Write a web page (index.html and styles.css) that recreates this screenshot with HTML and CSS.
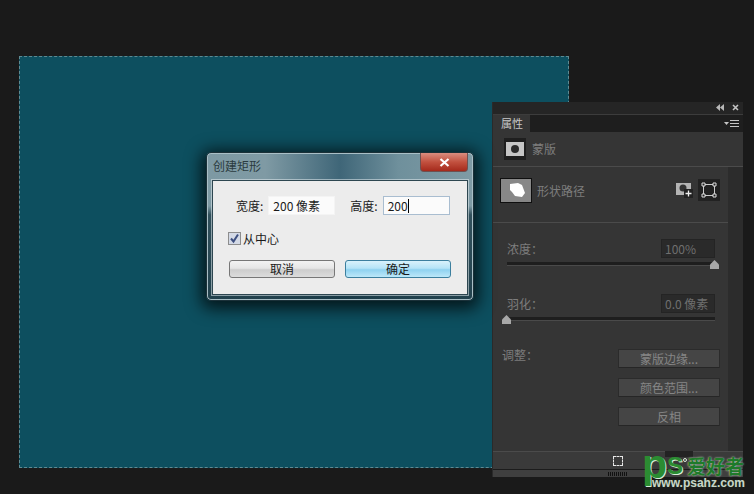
FILE: index.html
```html
<!DOCTYPE html>
<html lang="zh-CN">
<head>
    <meta charset="UTF-8">
    <title>创建矩形</title>
    <link rel="stylesheet" href="styles.css">
</head>
<body>

    <!-- Document canvas -->
    <div class="canvas"></div>

    <!-- Properties panel -->
    <div class="panel">
        <div class="panel-top">
            <svg class="top-icon" width="24" height="8" viewBox="0 0 24 8">
                <path d="M4 0v7L0 3.500zM8 0v7L4 3.500z" fill="#b8b8b8"/>
                <path d="M17 1l5 5M22 1l-5 5" stroke="#c4c4c4" stroke-width="1.600"/>
            </svg>
        </div>
        <div class="panel-tabs">
            <div class="tab">属性</div>
            <svg class="menu-icon" width="16" height="8" viewBox="0 0 16 8">
                <path d="M0 2h5L2.500 5z" fill="#c4c4c4"/>
                <path d="M6 .5h9M6 3.500h9M6 6.500h9" stroke="#c4c4c4"/>
            </svg>
        </div>
        <div class="panel-head">
            <div class="mask-thumb"><span class="mask-dot"></span></div>
            <span class="head-label">蒙版</span>
        </div>
        <div class="panel-main">
            <div class="panel-body">
                <div class="path-row">
                    <div class="path-thumb">
                        <svg width="30" height="23" viewBox="0 0 30 23">
                            <path d="M9 5l8-1 4 2 3 8-3 4-7-1-3-4-2-2z" fill="#fff"/>
                        </svg>
                    </div>
                    <span class="path-label">形状路径</span>
                    <svg class="add-mask" width="17" height="15" viewBox="0 0 17 15">
                        <rect x="0" y="0" width="15" height="12" fill="#b4b4b4"/>
                        <circle cx="7" cy="5" r="3.500" fill="#333"/>
                        <rect x="8" y="6" width="9" height="9" fill="#222"/>
                        <path d="M12.500 7.500v6M9.500 10.500h6" stroke="#eee" stroke-width="1.300"/>
                    </svg>
                    <div class="edit-box">
                        <svg width="16" height="16" viewBox="0 0 16 16">
                            <rect x="2.500" y="2.500" width="11" height="11" fill="none" stroke="#ccc"/>
                            <path d="M1 1h3v3H1zM12 1h3v3h-3zM1 12h3v3H1zM12 12h3v3h-3z" fill="#222" stroke="#ddd"/>
                        </svg>
                    </div>
                </div>
                <div class="sliders">
                    <div class="slider-group">
                        <div class="slider-top">
                            <span>浓度：</span>
                            <span class="value-box">100%</span>
                        </div>
                        <div class="track"><span class="knob knob-end"></span></div>
                    </div>
                    <div class="slider-group">
                        <div class="slider-top">
                            <span>羽化：</span>
                            <span class="value-box">0.0 像素</span>
                        </div>
                        <div class="track"><span class="knob knob-start"></span></div>
                    </div>
                </div>
                <div class="adjust">
                    <span class="adjust-label">调整：</span>
                    <div class="adjust-btns">
                        <div class="dark-btn">蒙版边缘...</div>
                        <div class="dark-btn">颜色范围...</div>
                        <div class="dark-btn">反相</div>
                    </div>
                </div>
            </div>
            <div class="scroll"></div>
        </div>
        <div class="panel-foot">
            <span class="select-icon"></span>
            <span class="foot-tab"></span>
        </div>
        <div class="panel-grip"><span class="grip"></span></div>
    </div>

    <!-- Dialog -->
    <div class="dialog">
        <div class="title-bar">
            <span class="title">创建矩形</span>
            <div class="close-btn">
                <svg width="11" height="9" viewBox="0 0 11 9">
                    <path d="M1.500 1l8 7M9.500 1l-8 7" stroke="#fff" stroke-width="2.200"/>
                </svg>
            </div>
        </div>
        <div class="client">
            <div class="field-row">
                <label class="field">宽度:<span class="input">200 像素</span></label>
                <label class="field">高度:<span class="input input-active">200<i class="caret"></i></span></label>
            </div>
            <div class="check-row">
                <span class="check">
                    <svg width="11" height="11" viewBox="0 0 11 11">
                        <path d="M2 5.500l2.500 3L9 1.500" fill="none" stroke="#3d4f80" stroke-width="2"/>
                    </svg>
                </span>
                <span>从中心</span>
            </div>
            <div class="btn-row">
                <div class="btn">取消</div>
                <div class="btn btn-default">确定</div>
            </div>
        </div>
    </div>

    <!-- Watermark -->
    <div class="watermark">
        <span class="wm-p">p</span><span class="wm-s">S</span><span class="wm-dot"></span><span class="wm-cn">爱好者</span>
        <div class="wm-url">www.psahz.com</div>
    </div>

</body>
</html>
```

FILE: styles.css
```css
* {
    margin: 0;
    padding: 0;
    box-sizing: border-box;
}
body {
    position: relative;
    width: 754px;
    height: 494px;
    overflow: hidden;
    background: #1a1a1a;
    font-family: "Noto Sans CJK SC", "Liberation Sans", sans-serif;
    font-size: 12px;
}
.canvas {
    position: absolute;
    left: 19px;
    top: 56px;
    width: 550px;
    height: 412px;
    background: #0d4f5f;
    border: 1px dashed #5f8a92;
}

/* Properties panel */
.panel {
    position: absolute;
    left: 492px;
    top: 102px;
    width: 251px;
    height: 375px;
    display: flex;
    flex-direction: column;
    background: #353535;
    color: #7d7d7d;
    border-left: 1px solid #2a2a2a;
}
.panel-top {
    height: 13px;
    flex-shrink: 0;
    display: flex;
    justify-content: flex-end;
    align-items: center;
    padding-right: 3px;
    background: #252525;
    border-bottom: 1px solid #3c3c3c;
}
.panel-tabs {
    height: 17px;
    flex-shrink: 0;
    display: flex;
    justify-content: space-between;
    align-items: center;
    padding-right: 3px;
    background: #1e1e1e;
}
.tab {
    width: 37px;
    height: 17px;
    background: #353535;
    color: #c8c8c8;
    font-size: 11px;
    line-height: 17px;
    padding-left: 8px;
}
.panel-head {
    height: 35px;
    flex-shrink: 0;
    display: flex;
    align-items: center;
    padding: 0 0 1px 11px;
    gap: 6px;
    border-bottom: 1px solid #4b4b4b;
}
.mask-thumb {
    width: 22px;
    height: 22px;
    display: flex;
    align-items: center;
    justify-content: center;
    background: #c6c6c6;
    border: 3px solid #1f1f1f;
    border-width: 4px 2px;
}
.mask-dot {
    width: 8px;
    height: 8px;
    border-radius: 50%;
    background: #2b2b2b;
}
.panel-main {
    flex: 1;
    display: flex;
    min-height: 0;
}
.panel-body {
    flex: 1;
    display: flex;
    flex-direction: column;
}
.scroll {
    width: 15px;
    background: #2c2c2c;
}
.path-row {
    height: 56px;
    flex-shrink: 0;
    display: flex;
    align-items: center;
    padding: 0 8px 9px 7px;
    border-bottom: 1px solid #4b4b4b;
}
.path-thumb {
    width: 32px;
    height: 25px;
    background: #878787;
    border: 1px solid #0f0f0f;
    overflow: hidden;
}
.path-thumb svg {
    display: block;
}
.path-label {
    margin-left: 5px;
    flex: 1;
}
.add-mask {
    margin-right: 5px;
}
.edit-box {
    width: 22px;
    height: 22px;
    display: flex;
    align-items: center;
    justify-content: center;
    background: #222;
}
.sliders {
    padding: 16px 13px 0 14px;
    display: flex;
    flex-direction: column;
    gap: 28px;
}
.slider-group {
    display: flex;
    flex-direction: column;
}
.slider-top {
    display: flex;
    justify-content: space-between;
    align-items: center;
    height: 19px;
}
.value-box {
    width: 54px;
    height: 19px;
    background: #2a2a2a;
    border: 1px solid #242424;
    line-height: 17px;
    padding-left: 3px;
    white-space: nowrap;
    color: #6f6f6f;
}
.track {
    position: relative;
    height: 4px;
    margin-top: 4px;
    background: #1e1e1e;
    border-bottom: 1px solid #4a4a4a;
}
.knob {
    position: absolute;
    top: -2px;
    width: 9px;
    height: 9px;
    background: #a8a8a8;
    clip-path: polygon(50% 0, 100% 50%, 100% 100%, 0 100%, 0 50%);
}
.knob-end {
    right: -4px;
}
.knob-start {
    left: -5px;
}
.adjust {
    display: flex;
    justify-content: space-between;
    padding: 28px 8px 0 9px;
}
.adjust-label {
    line-height: 12px;
}
.adjust-btns {
    display: flex;
    flex-direction: column;
    gap: 10px;
}
.dark-btn {
    width: 102px;
    height: 19px;
    background: #454545;
    border: 1px solid #2b2b2b;
    border-bottom-color: #262626;
    border-radius: 1px;
    text-align: center;
    line-height: 17px;
    color: #868686;
}
.panel-foot {
    position: relative;
    height: 19px;
    flex-shrink: 0;
    background: #3a3a3a;
    border-top: 1px solid #4b4b4b;
    border-bottom: 1px solid #1c1c1c;
}
.select-icon {
    position: absolute;
    left: 120px;
    top: 4px;
    width: 10px;
    height: 10px;
    border: 1px dashed #e8e8e8;
}
.foot-tab {
    position: absolute;
    left: 172px;
    top: -1px;
    width: 28px;
    height: 6px;
    background: #232323;
}
.panel-grip {
    height: 7px;
    flex-shrink: 0;
    display: flex;
    justify-content: center;
    background: #3f3f3f;
}
.grip {
    width: 20px;
    height: 4px;
    margin-top: 2px;
    background: repeating-linear-gradient(90deg, #111 0 1px, transparent 1px 2px);
}

/* Dialog */
.dialog {
    position: absolute;
    left: 206px;
    top: 152px;
    width: 268px;
    height: 149px;
    padding: 0 5px 5px;
    display: flex;
    flex-direction: column;
    border: 1px solid #1a3038;
    border-radius: 5px;
    background:
        linear-gradient(180deg, transparent 36%, rgba(18, 50, 62, 0.7) 42%, rgba(18, 50, 62, 0.85) 100%),
        linear-gradient(90deg, #7d99a3 0%, #7f9aa4 22%, #3f6678 50%, #6f909c 72%, #7f9ba5 100%);
    box-shadow: 0 0 0 1px #a9bfc6 inset, 0 3px 16px 5px rgba(0, 0, 0, 0.7);
}
.title-bar {
    position: relative;
    height: 27px;
    flex-shrink: 0;
}
.title {
    line-height: 25px;
    color: #2b3b40;
    padding-left: 1px;
}
.close-btn {
    position: absolute;
    right: 0;
    top: 0;
    width: 48px;
    height: 19px;
    display: flex;
    align-items: center;
    justify-content: center;
    background: linear-gradient(#d98d7f, #c2513f 50%, #a52a1c);
    border: 1px solid #6f5050;
    border-top: none;
    border-radius: 0 0 4px 4px;
}
.client {
    flex: 1;
    display: flex;
    flex-direction: column;
    background: #ececec;
    border: 1px solid #2d4650;
    box-shadow: 0 0 0 1px rgba(225, 235, 238, 0.55);
    color: #1a1a1a;
}
.field-row {
    display: flex;
    padding: 15px 0 0 23px;
    gap: 15px;
}
.field {
    display: flex;
    align-items: center;
    gap: 5px;
    white-space: nowrap;
}
.input {
    width: 67px;
    height: 19px;
    padding-left: 4px;
    background: #fbfbfb;
    line-height: 18px;
    border: 1px solid #f4f4f4;
}
.input-active {
    border-color: #a9bdd0;
}
.caret {
    display: inline-block;
    width: 1px;
    height: 14px;
    background: #000;
    vertical-align: -2px;
}
.check-row {
    display: flex;
    align-items: center;
    gap: 2px;
    padding: 15px 0 0 15px;
}
.check {
    width: 13px;
    height: 13px;
    display: flex;
    align-items: center;
    justify-content: center;
    background: #d4dae6;
    border: 1px solid #8d8d8d;
}
.btn-row {
    display: flex;
    gap: 10px;
    padding: 13px 0 0 16px;
}
.btn {
    width: 106px;
    height: 18px;
    text-align: center;
    line-height: 16px;
    border: 1px solid #777;
    border-radius: 3px;
    background: linear-gradient(#f3f3f3 0, #e6e6e6 45%, #cdcdcd 55%, #dcdcdc 100%);
}
.btn-default {
    border-color: #3c7f9e;
    background: linear-gradient(#d9f2fb 0, #b6e4f7 45%, #8fd2f0 55%, #bde8f9 100%);
}

/* Watermark */
.watermark {
    position: absolute;
    left: 642px;
    top: 449px;
    width: 110px;
    display: flex;
    align-items: flex-start;
}
.wm-p {
    font-family: "Liberation Sans", sans-serif;
    font-weight: bold;
    font-size: 41px;
    line-height: 30px;
    color: #2b8c32;
    text-shadow: 1px 1px 0 #d8efd8;
}
.wm-s {
    margin-top: 5px;
    font-family: "Liberation Sans", sans-serif;
    font-weight: bold;
    font-size: 24px;
    line-height: 24px;
    color: #2b8c32;
    text-shadow: 1px 1px 0 #d8efd8;
}
.wm-dot {
    width: 4px;
    height: 4px;
    margin-top: 9px;
    border: 1px solid #dfeedd;
    border-radius: 50%;
}
.wm-cn {
    margin-top: 7px;
    font-size: 19px;
    font-weight: bold;
    line-height: 19px;
    color: #1f7a2a;
    text-shadow: 0 0 2px #d8f0d8;
    white-space: nowrap;
}
.wm-url {
    position: absolute;
    left: 10px;
    top: 30px;
    font-family: "Liberation Sans", sans-serif;
    font-size: 12px;
    font-weight: bold;
    line-height: 8px;
    color: #c9d3c9;
    text-shadow: 0 0 1px #2d5a2d;
    white-space: nowrap;
}
```
